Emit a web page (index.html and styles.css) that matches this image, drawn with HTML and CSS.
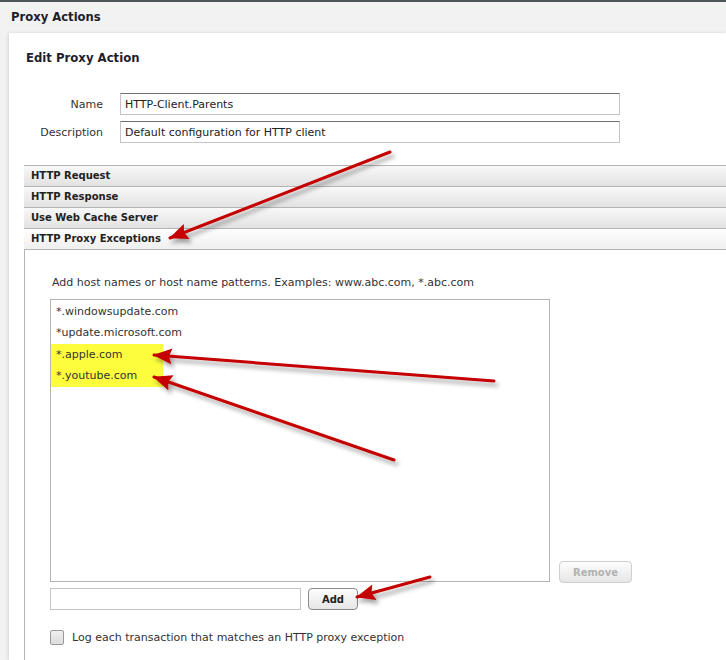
FILE: index.html
```html
<!DOCTYPE html>
<html lang="en">
<head>
  <meta charset="UTF-8">
  <title>Proxy Actions</title>
  <link rel="stylesheet" href="styles.css">
</head>
<body>
  <div class="topline"></div>
  <div class="page-title">Proxy Actions</div>

  <div class="panel">
    <h2>Edit Proxy Action</h2>

    <div class="form">
      <label for="name">Name</label>
      <input type="text" id="name" value="HTTP-Client.Parents">
      <label for="desc">Description</label>
      <input type="text" id="desc" value="Default configuration for HTTP client">
    </div>

    <div class="accordion">
      <div class="acc-head">HTTP Request</div>
      <div class="acc-head">HTTP Response</div>
      <div class="acc-head">Use Web Cache Server</div>
      <div class="acc-head open">HTTP Proxy Exceptions</div>
      <div class="acc-body">
        <p class="hint">Add host names or host name patterns. Examples: www.abc.com, *.abc.com</p>
        <div class="list-row">
          <ul class="hostlist">
            <li>*.windowsupdate.com</li>
            <li>*update.microsoft.com</li>
            <li class="mark">*.apple.com</li>
            <li class="mark">*.youtube.com</li>
          </ul>
          <button class="btn disabled">Remove</button>
        </div>
        <div class="add-row">
          <input type="text" class="host-input">
          <button class="btn">Add</button>
        </div>
        <label class="check-row">
          <input type="checkbox" class="check">
          <span>Log each transaction that matches an HTTP proxy exception</span>
        </label>
      </div>
    </div>
  </div>

  <svg class="arrows" width="726" height="660" viewBox="0 0 726 660">
    <defs>
      <marker id="head" markerUnits="userSpaceOnUse" markerWidth="19" markerHeight="16" refX="18" refY="8" orient="auto">
        <path d="M0,0 L19,8 L0,16 L3,8 z" fill="#c40000"/>
      </marker>
      <filter id="shade" x="-20%" y="-20%" width="140%" height="160%">
        <feDropShadow dx="3" dy="4" stdDeviation="2" flood-color="#000" flood-opacity="0.35"/>
      </filter>
    </defs>
    <g stroke="#c40000" stroke-width="3" stroke-linecap="round" fill="none" filter="url(#shade)">
      <line x1="390" y1="152" x2="170" y2="238" marker-end="url(#head)"/>
      <line x1="494" y1="381" x2="154" y2="355" marker-end="url(#head)"/>
      <line x1="394" y1="460" x2="154" y2="377" marker-end="url(#head)"/>
      <line x1="430" y1="577" x2="357" y2="597" marker-end="url(#head)"/>
    </g>
  </svg>
</body>
</html>
```

FILE: styles.css
```css
* {
  margin: 0;
  padding: 0;
  box-sizing: border-box;
}

body {
  font-family: "DejaVu Sans", Verdana, sans-serif;
  font-size: 11px;
  color: #222;
  background: #f2f2f2;
  height: 660px;
  overflow: hidden;
  position: relative;
}

.topline {
  height: 2px;
  background: #4e5658;
}

.page-title {
  height: 31px;
  line-height: 31px;
  padding-left: 11px;
  font-size: 11.6px;
  font-weight: bold;
  color: #1e1e2a;
}

.panel {
  margin-left: 9px;
  background: #fff;
  height: 627px;
  box-shadow: -1px 0 3px rgba(0, 0, 0, 0.12);
}

.panel h2 {
  font-size: 11.7px;
  font-weight: bold;
  color: #1e1e2a;
  padding: 18px 0 0 17px;
  height: 60px;
}

.form {
  display: grid;
  grid-template-columns: 94px 500px;
  column-gap: 17px;
  row-gap: 6px;
  align-items: center;
  margin-bottom: 22px;
}

.form label {
  text-align: right;
  color: #333;
}

.form input,
.host-input {
  height: 22px;
  border: 1px solid #c4c4c4;
  border-top-color: #707070;
  padding: 0 4px;
  font: inherit;
  color: #222;
}

.accordion {
  margin-left: 15px;
}

.acc-head {
  height: 21px;
  line-height: 20px;
  padding-left: 7px;
  font-size: 10px;
  font-weight: bold;
  color: #222;
  border-top: 1px solid #b4b4b4;
  background: linear-gradient(#f8f8f8, #e2e2e2);
}

.acc-head.open {
  background: linear-gradient(#fefefe, #efefef);
  border-bottom: 1px solid #b4b4b4;
  height: 22px;
}

.acc-body {
  border-left: 1px solid #b4b4b4;
  padding: 26px 0 0 25px;
  height: 420px;
}

.hint {
  margin-left: 2px;
  color: #333;
  height: 23px;
}

.list-row {
  display: flex;
  align-items: flex-end;
  gap: 9px;
}

.hostlist {
  list-style: none;
  width: 500px;
  height: 283px;
  border: 1px solid #b4b4b4;
  padding-top: 1px;
}

.hostlist li {
  height: 21.4px;
  line-height: 21px;
  padding-left: 5px;
  color: #333;
}

.hostlist li.mark {
  width: 112px;
  background: #fdfd3e;
}

.btn {
  font: inherit;
  font-size: 10px;
  font-weight: bold;
  color: #222;
  height: 22px;
  padding: 0 12px;
  border: 1px solid #8a8a8a;
  border-radius: 4px;
  background: linear-gradient(#fdfdfd, #e6e6e6);
}

.btn.disabled {
  color: #b2b2b2;
  border-color: #cfcfcf;
  margin-bottom: -1px;
  width: 73px;
}

.add-row {
  display: flex;
  gap: 7px;
  margin-top: 6px;
}

.host-input {
  width: 251px;
  border-top-color: #c4c4c4;
}

.add-row .btn {
  width: 50px;
}

.check-row {
  display: flex;
  align-items: center;
  gap: 8px;
  margin-top: 20px;
  color: #333;
}

.check {
  appearance: none;
  width: 14px;
  height: 15px;
  border: 1px solid #9a9a9a;
  border-radius: 2px;
  background: linear-gradient(#f0f0f0, #dcdcdc);
}

.arrows {
  position: absolute;
  top: 0;
  left: 0;
  pointer-events: none;
}
```
